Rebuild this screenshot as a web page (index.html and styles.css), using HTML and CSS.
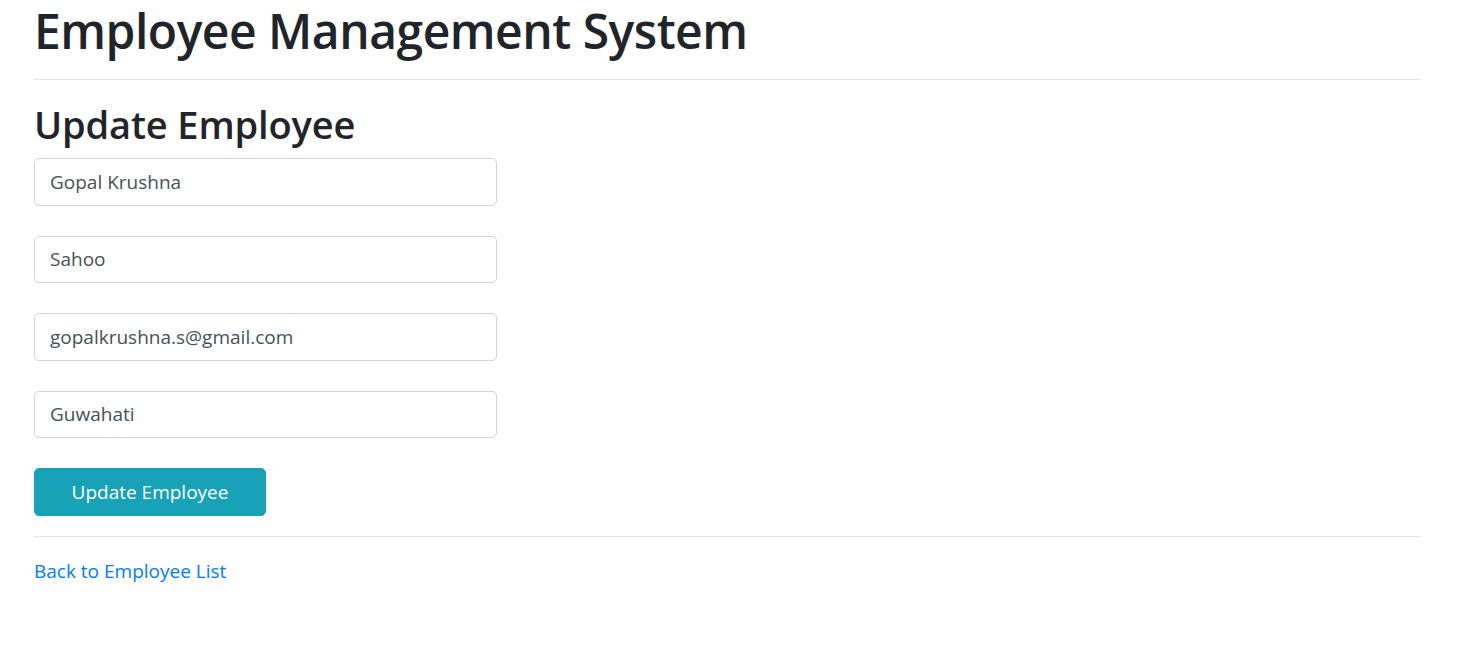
FILE: index.html
```html
<!DOCTYPE html>
<html lang="en">
<head>
<meta charset="utf-8">
<title>Employee Management System</title>
<link rel="stylesheet" href="styles.css">
</head>
<body>
<div class="container">
  <h1 class="title">Employee Management System</h1>
  <hr class="divider">
  <h2 class="subtitle">Update Employee</h2>
  <form class="form">
    <div class="form-group"><input class="form-control" type="text" value="Gopal Krushna"></div>
    <div class="form-group"><input class="form-control" type="text" value="Sahoo"></div>
    <div class="form-group"><input class="form-control" type="text" value="gopalkrushna.s@gmail.com"></div>
    <div class="form-group"><input class="form-control" type="text" value="Guwahati"></div>
    <button type="button" class="btn-info">Update Employee</button>
  </form>
  <hr class="divider">
  <a class="back-link" href="#">Back to Employee List</a>
</div>
</body>
</html>
```

FILE: styles.css
```css
* { box-sizing: border-box; }
html, body {
  margin: 0;
  padding: 0;
  background: #fff;
}
body {
  font-family: "Open Sans", "Noto Sans", "Liberation Sans", sans-serif;
  color: #212529;
  font-size: 19px;
  line-height: 1.5;
}
.container {
  padding: 0 52px 0 34px;
}
.title {
  margin: 0;
  padding-top: 2px;
  font-size: 48px;
  font-weight: 600;
  letter-spacing: -0.5px;
  line-height: 57px;
}
.divider {
  margin: 20px 0;
  border: 0;
  border-top: 1px solid rgba(0,0,0,.1);
  height: 0;
}
.subtitle {
  margin: 0 0 10px;
  font-size: 38px;
  font-weight: 600;
  letter-spacing: -0.15px;
  line-height: 48px;
}
.form {
  width: 463px;
}
.form-group {
  margin-bottom: 30px;
}
.form-control {
  display: block;
  width: 100%;
  height: 47.5px;
  padding: 7.5px 15px;
  font-family: inherit;
  font-size: 19px;
  line-height: 1.5;
  color: #495057;
  background: #fff;
  border: 1px solid #ced4da;
  border-radius: 5px;
  outline: none;
}
.btn-info {
  display: block;
  width: 232px;
  height: 47.5px;
  padding: 7.5px 15px;
  font-family: inherit;
  font-size: 19px;
  line-height: 1.5;
  color: #fff;
  background: #17a2b8;
  border: 1px solid #17a2b8;
  border-radius: 5px;
  cursor: pointer;
}
.back-link {
  color: #007bff;
  text-decoration: none;
  font-size: 19px;
}
```
